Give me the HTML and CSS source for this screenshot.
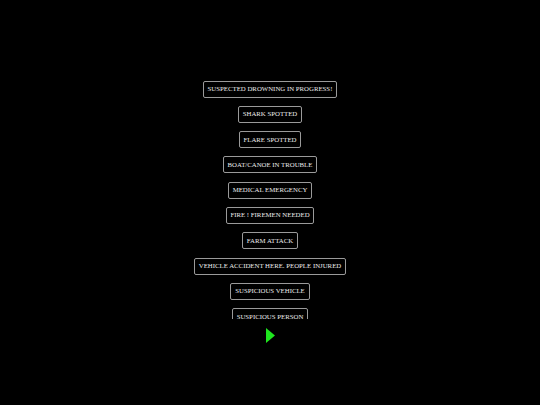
FILE: index.html
```html
<!DOCTYPE html>
<html>
<head>
<meta charset="utf-8">
<link rel="stylesheet" href="styles.css">
</head>
<body>
<div class="page">
  <div class="list">
    <button class="alert">SUSPECTED DROWNING IN PROGRESS!</button>
    <button class="alert">SHARK SPOTTED</button>
    <button class="alert">FLARE SPOTTED</button>
    <button class="alert">BOAT/CANOE IN TROUBLE</button>
    <button class="alert">MEDICAL EMERGENCY</button>
    <button class="alert">FIRE ! FIREMEN NEEDED</button>
    <button class="alert">FARM ATTACK</button>
    <button class="alert">VEHICLE ACCIDENT HERE. PEOPLE INJURED</button>
    <button class="alert">SUSPICIOUS VEHICLE</button>
    <button class="alert">SUSPICIOUS PERSON</button>
  </div>
  <div class="next">
    <svg width="9" height="15" viewBox="0 0 9 15"><polygon points="0,0 9,7.5 0,15" fill="#1ee61e"/></svg>
  </div>
</div>
</body>
</html>
```
FILE: styles.css
```css
html, body {
  margin: 0;
  padding: 0;
  background: #000;
}
.page {
  width: 540px;
  height: 405px;
  padding-top: 80px;
  box-sizing: border-box;
  display: flex;
  flex-direction: column;
  align-items: center;
}
.list {
  height: 239px;
  width: 100%;
  overflow: hidden;
  display: flex;
  flex-direction: column;
  align-items: center;
  gap: 8.3px;
  padding-top: 0.5px;
  box-sizing: border-box;
}
.alert {
  flex: none;
  font-family: "Liberation Serif", "Times New Roman", serif;
  font-size: 6.8px;
  line-height: 8px;
  color: #ececec;
  background: #000;
  border: 1px solid #9a9a9a;
  border-radius: 2px;
  padding: 3.5px 3.8px;
  margin: 0;
  white-space: nowrap;
}
.next {
  margin-top: 8.5px;
  display: flex;
  justify-content: center;
  width: 100%;
  padding-left: 1px;
}
.next svg {
  display: block;
}
```
